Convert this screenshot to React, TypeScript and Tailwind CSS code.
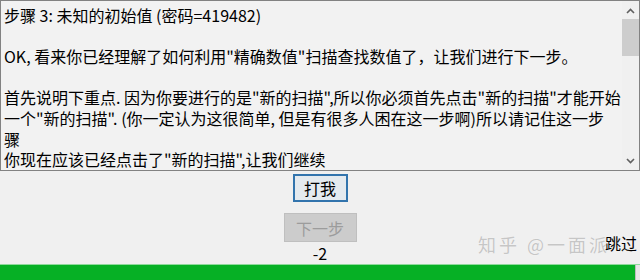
const FONT = { fontFamily: '"Noto Sans CJK SC", "Noto Sans", sans-serif' };

const LINES = [
  '步骤 3: 未知的初始值 (密码=419482)',
  '',
  'OK, 看来你已经理解了如何利用"精确数值"扫描查找数值了，让我们进行下一步。',
  '',
  '首先说明下重点. 因为你要进行的是"新的扫描",所以你必须首先点击"新的扫描"才能开始',
  '一个"新的扫描". (你一定认为这很简单, 但是有很多人困在这一步啊)所以请记住这一步',
  '骤',
  '你现在应该已经点击了"新的扫描",让我们继续',
];

function Chevron({ up }: { up?: boolean }) {
  return (
    <svg width="9" height="6" viewBox="0 0 9 6" className={up ? '' : 'rotate-180'}>
      <path d="M1 5 L4.5 1.5 L8 5" fill="none" stroke="#606060" strokeWidth="1.6" />
    </svg>
  );
}

function ScrollBar() {
  return (
    <div className="w-[17px] flex flex-col bg-[#f0f0f0]">
      <div className="h-[17px] flex items-center justify-center pt-[2px]">
        <Chevron up />
      </div>
      <div className="h-[37px] mt-[1px] bg-[#cdcdcd]" />
      <div className="flex-1" />
      <div className="h-[17px] flex items-center justify-center pb-[1px]">
        <Chevron />
      </div>
    </div>
  );
}

export default function App() {
  return (
    <div className="w-[640px] h-[280px] bg-[#f0f0f0] flex flex-col overflow-hidden text-black" style={FONT}>
      {/* memo */}
      <div className="h-[171px] flex border border-[#828282] bg-[#f2f2f2]">
        <div className="flex-1 overflow-hidden pl-[3px] pt-[4px] text-[16px] leading-[20.6px]">
          {LINES.map((l, i) => (
            <div key={i} className="whitespace-nowrap h-[20.6px]">
              {l}
            </div>
          ))}
        </div>
        <ScrollBar />
      </div>

      <div className="flex-1 grid grid-cols-[1fr_auto_1fr]">
        <div />
        <div className="flex flex-col items-center">
          <button className="mt-[3px] w-[55px] h-[28px] border-2 border-[#3274ad] bg-[#e4eaef] text-[16px] leading-none">
            打我
          </button>
          <button
            disabled
            className="mt-[11px] w-[73px] h-[29px] border border-[#bfbfbf] bg-[#cccccc] text-[16px] leading-none text-[#9c9c9c]"
          >
            下一步
          </button>
          <div className="mt-[1px] text-[16px] leading-[21px]">-2</div>
        </div>
        <div className="relative flex items-end justify-end pb-[10px] pr-[3px]">
          <span className="absolute right-[30px] bottom-[9px] text-[18px] leading-[22px] tracking-[3px] text-[#c6c6c6] whitespace-nowrap [text-shadow:0_0_1px_#ffffff]">
            知乎 @一面派
          </span>
          <span className="relative text-[16px] leading-[21px]">跳过</span>
        </div>
      </div>

      {/* progress */}
      <div className="h-[16px] flex border-t border-[#8fd99c]">
        <div className="flex-1 bg-[#06b025]" />
        <div className="w-[5px] bg-[#e6e6e6] border-l border-[#bcbcbc]" />
      </div>
    </div>
  );
}
